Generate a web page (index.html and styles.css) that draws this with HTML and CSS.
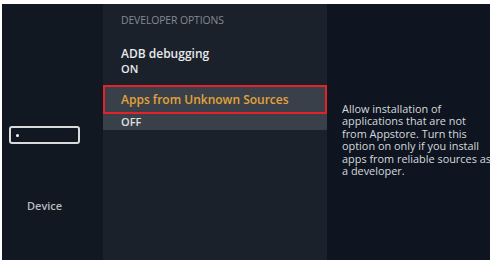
FILE: index.html
```html
<!DOCTYPE html>
<html lang="en">
<head>
  <meta charset="UTF-8">
  <title>Developer Options</title>
  <link rel="stylesheet" href="styles.css">
</head>
<body>
  <div class="screen">
    <!-- Left: device column -->
    <div class="side-panel">
      <div class="device-box"><span class="device-dot"></span></div>
      <div class="device-label">Device</div>
    </div>
    <!-- Middle: options list -->
    <div class="options-panel">
      <div class="options-title">DEVELOPER OPTIONS</div>
      <div class="option">
        <div class="option-name">ADB debugging</div>
        <div class="option-value">ON</div>
      </div>
      <div class="option focused">
        <div class="option-name">Apps from Unknown Sources</div>
        <div class="option-value">OFF</div>
      </div>
    </div>
    <!-- Right: description -->
    <div class="info-panel">
      <p class="info-text">Allow installation of applications that are not from Appstore. Turn this option on only if you install apps from reliable sources as a developer.</p>
    </div>
  </div>
</body>
</html>
```

FILE: styles.css
```css
body {
  margin: 0;
  background: #fff;
  font-family: 'Open Sans', 'Liberation Sans', sans-serif;
}
.screen {
  display: grid;
  grid-template-columns: 101px 224px 1fr;
  width: 488px;
  height: 256px;
  margin: 4px 0 0 2px;
  background: #0e1520;
}
/* Left column */
.side-panel {
  background: #111821;
  display: flex;
  flex-direction: column;
  align-items: flex-start;
}
.device-box {
  margin: 122px 0 0 7px;
  width: 67px;
  height: 14px;
  border: 2px solid #d8dadc;
  border-radius: 3px;
  display: flex;
  align-items: center;
}
.device-dot {
  width: 3px;
  height: 3px;
  margin-left: 5px;
  background: #fff;
  border-radius: 50%;
}
.device-label {
  margin: 54px 0 0 25px;
  font-size: 11px;
  font-weight: 600;
  color: #b7bbbf;
}
/* Middle column */
.options-panel {
  background: #1b212b;
}
.options-title {
  margin: 9px 0 0 18px;
  font-size: 10.4px;
  color: #858a92;
  letter-spacing: -0.1px;
}
.option {
  padding-left: 18px;
  margin-top: 19px;
}
.option-name {
  font-size: 12px;
  font-weight: 600;
  color: #e8eaec;
  line-height: 15px;
}
.option-value {
  font-size: 11px;
  font-weight: 600;
  color: #e8eaec;
  line-height: 15px;
}
.option.focused {
  margin-top: 9px;
  padding-left: 0;
  background: #3a4049;
}
.option.focused .option-name {
  color: #e3a338;
  border: 2px solid #e3222a;
  padding: 6px 16px 5px;
  line-height: 14px;
}
.option.focused .option-value {
  padding: 0 0 1px 18px;
  color: #dfe1e3;
}
/* Right column */
.info-panel {
  padding: 99px 0 0 15px;
}
.info-text {
  margin: 0;
  width: 150px;
  font-size: 10.9px;
  line-height: 12.4px;
  color: #d6d9dc;
}
```
